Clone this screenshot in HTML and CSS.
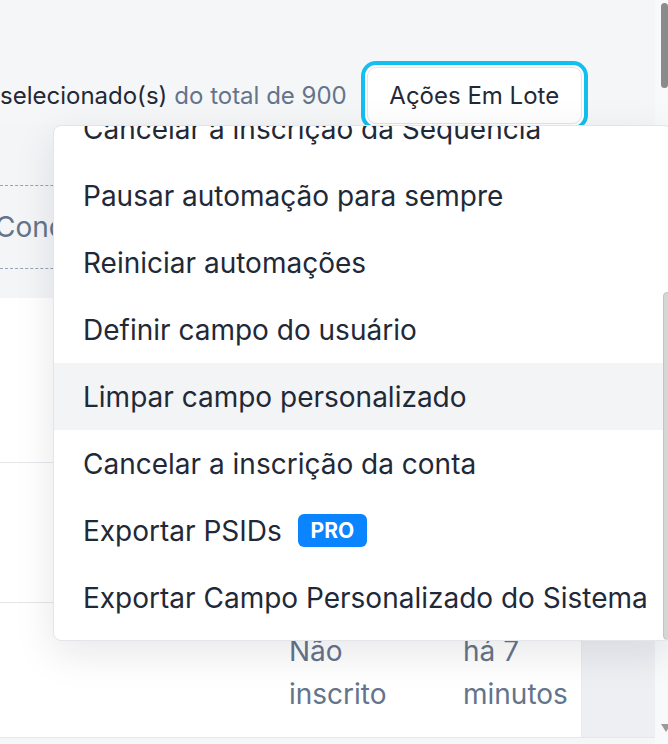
FILE: index.html
```html
<!DOCTYPE html>
<html lang="pt-BR">
<head>
<meta charset="utf-8">
<link rel="stylesheet" href="styles.css">
</head>
<body>
<div class="app">
  <div class="main">
    <div class="toolbar">
      <span class="sel">selecionado(s)</span>
      <span class="total">do total de 900</span>
      <button class="bulk">Ações Em Lote</button>
    </div>
    <div class="table">
      <div class="row head">
        <div class="cell c1"><div class="hcell"><span class="htext">Condição</span></div></div>
        <div class="cell c2"></div>
        <div class="cell c3"></div>
        <div class="cell c4"></div>
      </div>
      <div class="row r1">
        <div class="cell c1"></div><div class="cell c2"></div><div class="cell c3"></div><div class="cell c4 act"></div>
      </div>
      <div class="row r2">
        <div class="cell c1"></div><div class="cell c2"></div><div class="cell c3"></div><div class="cell c4 act"></div>
      </div>
      <div class="row r3">
        <div class="cell c1"></div>
        <div class="cell c2 muted">Não<br>inscrito</div>
        <div class="cell c3 muted">há 7<br>minutos</div>
        <div class="cell c4 act"></div>
      </div>
    </div>
  </div>
  <div class="vscroll">
    <div class="vthumb"></div>
    <div class="varrow"></div>
  </div>

  <div class="menu">
    <div class="menu-view">
      <ul class="menu-list">
        <li class="item">Cancelar a inscrição da Sequência</li>
        <li class="item">Pausar automação para sempre</li>
        <li class="item">Reiniciar automações</li>
        <li class="item">Definir campo do usuário</li>
        <li class="item hover">Limpar campo personalizado</li>
        <li class="item">Cancelar a inscrição da conta</li>
        <li class="item">Exportar PSIDs <span class="pro">PRO</span></li>
        <li class="item">Exportar Campo Personalizado do Sistema</li>
      </ul>
    </div>
    <div class="menu-scroll"><div class="menu-thumb"></div></div>
  </div>
</div>
</body>
</html>
```
FILE: styles.css
```css
* { box-sizing: border-box; }
html, body { margin: 0; padding: 0; }
body {
  width: 668px;
  height: 744px;
  overflow: hidden;
  background: #f3f4f6;
  font-family: Inter, "Noto Sans", sans-serif;
  font-size: 24px;
  color: #1f2937;
}
.app {
  position: relative;
  width: 668px;
  height: 744px;
  display: flex;
}
.main {
  width: 655px;
  display: flex;
  flex-direction: column;
  background: #f5f6f8;
}
.toolbar {
  height: 125px;
  display: flex;
  align-items: center;
  padding: 67px 0 1px 0;
  white-space: nowrap;
}
.sel { color: #1f2937; }
.total { color: #64748b; margin-left: 7px; }
.bulk {
  margin-left: 20px;
  height: 57px;
  width: 215px;
  font: inherit;
  color: #1f2937;
  background: #fff;
  border: 1px solid #e2e5ea;
  border-radius: 9px;
  box-shadow: 0 0 0 2px #fff, 0 0 0 6px #13bef0;
  padding: 0;
}
.table {
  display: flex;
  flex-direction: column;
  font-size: 28px;
}
.row {
  display: grid;
  grid-template-columns: 265px 174px 142px 74px;
  background: #fff;
  border-bottom: 1px solid #e5e7eb;
}
.row.head {
  height: 173px;
  background: #f4f5f7;
  border-bottom: none;
  padding: 60px 0 29px;
}
.hcell {
  height: 84px;
  border-top: 1px dashed #94a3b8;
  border-bottom: 1px dashed #94a3b8;
  display: flex;
  align-items: center;
  color: #64748b;
  white-space: nowrap;
  overflow: hidden;
}
.htext { margin-left: -5px; }
.r1 { height: 165px; }
.r2 { height: 140px; }
.r3 { height: 135px; }
.cell.c2, .cell.c3 { padding: 27px 0 0 24px; }
.muted { color: #64748b; line-height: 43px; }
.act {
  background: #edeff3;
  box-shadow: inset 1px 0 0 #e8eaee;
}
.vscroll {
  width: 13px;
  background: #f8f9fa;
  display: flex;
  flex-direction: column;
  justify-content: space-between;
  align-items: flex-end;
  padding: 3px 0 12px;
}
.vthumb {
  width: 7px;
  height: 85px;
  border-radius: 4px;
  background: #8b8b8b;
}
.varrow {
  width: 0;
  height: 0;
  border-left: 5px solid transparent;
  border-right: 5px solid transparent;
  border-top: 8px solid #9a9a9a;
  margin-right: -3px;
}

.menu {
  position: absolute;
  left: 53px;
  top: 125px;
  width: 619px;
  height: 516px;
  background: #fff;
  border: 1px solid #e2e5ea;
  border-radius: 8px;
  box-shadow: 0 12px 40px rgba(15, 23, 42, 0.10);
  display: flex;
  overflow: hidden;
  font-size: 28px;
}
.menu-view {
  flex: 1;
  overflow: hidden;
}
.menu-list {
  list-style: none;
  margin: -31px 0 0;
  padding: 0;
}
.item {
  height: 67px;
  display: flex;
  align-items: center;
  padding-left: 29px;
  white-space: nowrap;
  color: #1f2937;
}
.item.hover { background: #f3f4f6; }
.pro {
  margin-left: 16px;
  width: 69px;
  height: 33px;
  border-radius: 6px;
  background: #0a84ff;
  color: #fff;
  font-size: 21px;
  font-weight: 700;
  display: inline-flex;
  align-items: center;
  justify-content: center;
}
.menu-scroll {
  width: 8px;
  padding-top: 166px;
  display: flex;
}
.menu-thumb {
  width: 8px;
  height: 348px;
  border-radius: 4px;
  background: #d6d6d6;
  border: 1px solid #c4c4c4;
}
```
